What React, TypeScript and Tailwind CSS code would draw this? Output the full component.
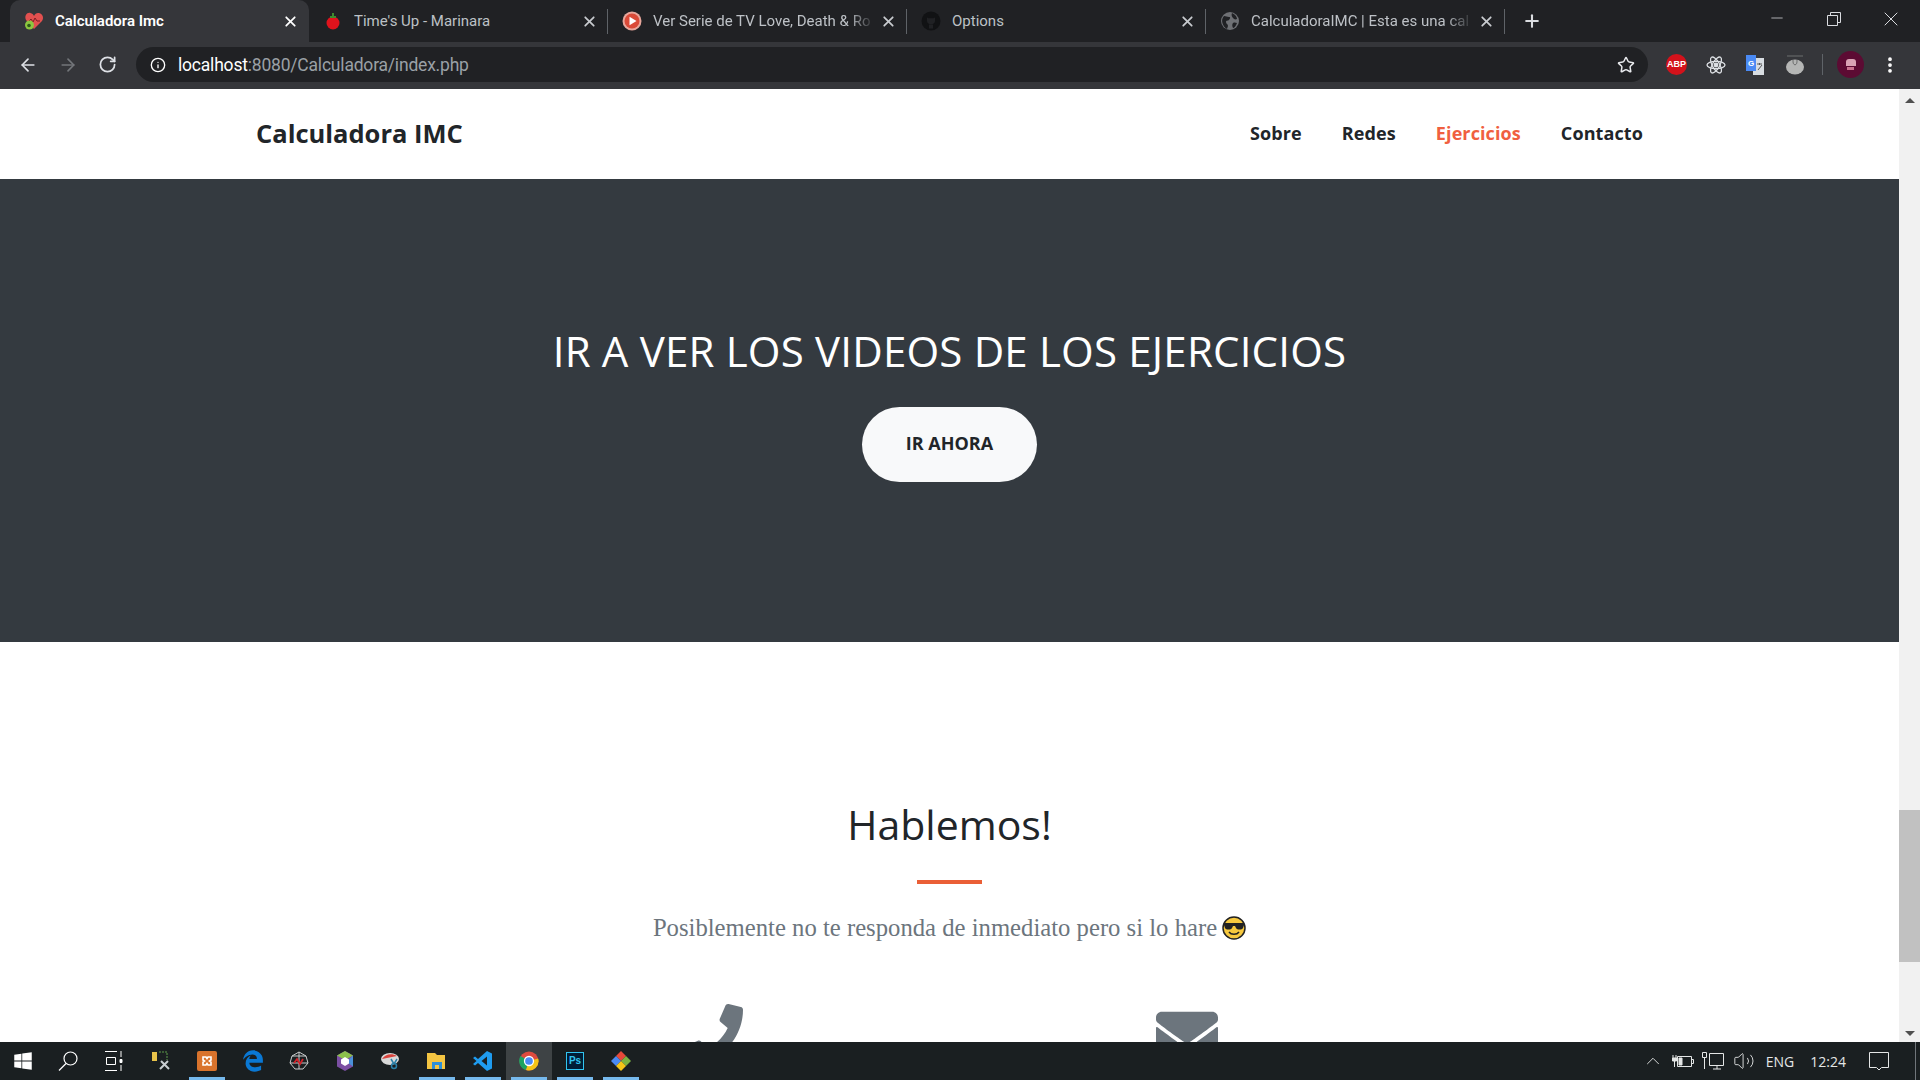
import type { ReactNode } from "react";
import { ArrowLeft, ArrowRight, RotateCw, Info, X, Plus, Minus, Star, EllipsisVertical, ChevronUp, Volume2 } from "lucide-react";
import { FaPhone, FaEnvelope, FaWindows, FaEdgeLegacy } from "react-icons/fa";

const Heart = () => (
  <svg viewBox="0 0 20 20" className="w-5 h-5">
    <path d="M10 18 L2 9 C0 5 3 1 6.500 2 C8 2.400 9.500 3.500 10 5 C11 2.500 13 1.500 15 2 C19 3 20 7 18 10z" fill="#e2504f" />
    <path d="M5 10l2-2 2 3 2-4 2 3h3" stroke="#7a1e22" strokeWidth="1" fill="none" />
    <circle cx="5.500" cy="14" r="4.500" fill="#8cc63f" />
    <circle cx="5" cy="14.500" r="1.800" fill="#2e5b18" />
  </svg>
);

const Tomato = () => (
  <svg viewBox="0 0 20 20" className="w-5 h-5">
    <circle cx="10" cy="12" r="6.500" fill="#e0131c" />
    <path d="M10 2v4M7 6h6" stroke="#3d8b2e" strokeWidth="2" />
  </svg>
);

const PlayIcon = () => (
  <svg viewBox="0 0 20 20" className="w-5 h-5">
    <circle cx="10" cy="10" r="9.500" fill="#e8a79c" />
    <circle cx="10" cy="10" r="7.500" fill="#da4a38" />
    <path d="M7.500 5.800v8.400l7-4.200z" fill="#fff" />
  </svg>
);

const GithubIcon = () => (
  <svg viewBox="0 0 20 20" className="w-5 h-5">
    <circle cx="10" cy="10" r="9.500" fill="#111214" />
    <path d="M6 6.500l1.500.8h5l1.500-.8v3.500c0 2-1.500 3.200-4 3.200s-4-1.200-4-3.200z" fill="#202124" />
    <path d="M8 13.500v4h4v-4z" fill="#202124" />
  </svg>
);

const GlobeIcon = () => (
  <svg viewBox="0 0 20 20" className="w-5 h-5">
    <circle cx="10" cy="10" r="9" fill="#6f7175" />
    <path d="M4 5c2 0 3 1 5 1s1 2 0 3-3 0-3 2 2 2 2 4l-1 3C3 16 0 9 4 5zM12 2c2 1 5 3 5 6-2 1-3 0-4-1s-2-3-1-5zM13 12c2-1 3 0 4 0-1 3-3 5-4 5-1-2-1-4 0-5z" fill="#202124" />
  </svg>
);

function Tab({ icon, title, active, fade }: { icon: ReactNode; title: string; active?: boolean; fade?: boolean }) {
  return (
    <div
      className={`relative w-[299px] h-[42px] flex items-center pl-[14px] pr-[10px] shrink-0 ${
        active ? "bg-[#35363a] rounded-t-[10px] text-white font-semibold" : "text-[#bdc1c6]"
      }`}
    >
      <span className="w-5 h-5 shrink-0">{icon}</span>
      <span
        className={`ml-[11px] w-[223px] text-[15px] leading-5 whitespace-nowrap overflow-hidden font-['Roboto',sans-serif] ${
          fade ? "[mask-image:linear-gradient(to_right,black_88%,transparent)]" : ""
        }`}
      >
        {title}
      </span>
      <X className={`ml-[5px] w-[17px] h-[17px] ${active ? "text-white" : "text-[#c8cbcf]"}`} strokeWidth={2.500} />
      {!active && <span className="absolute right-0 top-[9px] w-px h-[25px] bg-[#5f6368]" />}
    </div>
  );
}

function TabStrip() {
  return (
    <div className="h-[42px] bg-[#202124] flex pl-[10px] shrink-0">
      <Tab active icon={<Heart />} title="Calculadora Imc" />
      <Tab icon={<Tomato />} title="Time's Up - Marinara" />
      <Tab fade icon={<PlayIcon />} title="Ver Serie de TV Love, Death & Ro" />
      <Tab icon={<GithubIcon />} title="Options" />
      <Tab fade icon={<GlobeIcon />} title="CalculadoraIMC | Esta es una cal" />
      <Plus className="ml-[17px] mt-[11px] w-[20px] h-[20px] text-[#dadce0]" strokeWidth={2.500} />
      <div className="ml-auto flex items-start text-[#dadce0]">
        <Minus className="mt-[9px] mr-[41px] w-[18px] h-[18px]" strokeWidth={1} />
        <svg viewBox="0 0 14 14" className="mt-[12px] mr-[38px] w-[14px] h-[14px]" fill="none" stroke="currentColor">
          <path d="M3.500 3.500V.5h10v10h-3M.5 3.500h10v10H.5z" />
        </svg>
        <X className="mt-[7px] mr-[17px] w-[24px] h-[24px]" strokeWidth={1} />
      </div>
    </div>
  );
}

function Toolbar() {
  return (
    <div className="h-[47px] bg-[#35363a] flex items-start pt-[5px] shrink-0">
      <div className="w-[136px] h-[35px] flex items-center pl-[18px] gap-[20px]">
        <ArrowLeft className="w-[20px] h-[20px] text-[#dee1e6]" strokeWidth={2} />
        <ArrowRight className="w-[20px] h-[20px] text-[#73767a]" strokeWidth={2} />
        <RotateCw className="w-[19px] h-[19px] text-[#dee1e6]" strokeWidth={2.200} />
      </div>
      <div className="w-[1512px] h-[35px] bg-[#202124] rounded-full flex items-center pl-[14px] pr-[13px] shrink-0">
        <Info className="w-[16px] h-[16px] text-white" strokeWidth={2} />
        <span className="ml-[12px] text-[17.500px] leading-6 tracking-[-0.2px] text-[#9aa0a6] font-['Roboto',sans-serif]">
          <span className="text-white">localhost</span>:8080/Calculadora/index.php
        </span>
        <Star className="ml-auto w-[18px] h-[18px] text-[#e8eaed]" strokeWidth={2} />
      </div>
      <div className="flex items-center h-[35px] flex-1">
        <span className="ml-[18px] w-[21px] h-[21px] bg-[#d3121b] rounded-full text-white text-[9px] font-bold flex items-center justify-center font-['Liberation_Sans',sans-serif]">
          ABP
        </span>
        <svg viewBox="0 0 20 20" className="ml-[19px] w-[20px] h-[20px]" fill="none" stroke="#dde0e4" strokeWidth="1.300">
          <ellipse cx="10" cy="10" rx="9" ry="3.600" />
          <ellipse cx="10" cy="10" rx="9" ry="3.600" transform="rotate(60 10 10)" />
          <ellipse cx="10" cy="10" rx="9" ry="3.600" transform="rotate(120 10 10)" />
          <circle cx="10" cy="10" r="1.800" fill="#dde0e4" />
        </svg>
        <svg viewBox="0 0 20 20" className="ml-[19px] w-5 h-5">
          <path d="M8 3h11v17H8z" fill="#d8dde2" />
          <path d="M12 9h5M14.500 8v2M13 15l4-5" stroke="#555" strokeWidth="1" />
          <path d="M1 0h10v16H1z" fill="#4a8af4" />
          <text x="3" y="11" fontSize="8" fontWeight="700" fill="#fff" fontFamily="Liberation Sans, sans-serif">G</text>
        </svg>
        <svg viewBox="0 0 20 20" className="ml-[20px] w-5 h-5">
          <ellipse cx="10" cy="12" rx="9" ry="7.500" fill="#b5b6b5" />
          <path d="M8 5c0 3 0 4 2 5 2-1 2-2 2-5M2 1h16" stroke="#6d6e6e" strokeWidth="1" fill="none" />
        </svg>
        <span className="ml-[17px] w-px h-[21px] bg-[#5f6368]" />
        <span className="ml-[14px] w-[27px] h-[27px] rounded-full bg-[#5c0b33] flex flex-col items-center justify-center gap-px">
          <span className="w-[10px] h-[7px] bg-[#d9a3b5] rounded-t-[3px]" />
          <span className="w-[7px] h-[3px] bg-[#c8728f]" />
        </span>
        <EllipsisVertical className="ml-[16px] w-[20px] h-[20px] text-white" strokeWidth={2.500} />
      </div>
    </div>
  );
}

function Scrollbar() {
  return (
    <div className="w-[21px] bg-[#f1f1f1] flex flex-col items-center shrink-0 relative">
      <span className="mt-[9px] w-0 h-0 border-x-[5px] border-x-transparent border-b-[5px] border-b-[#505050]" />
      <span className="absolute left-0 top-[721px] w-[21px] h-[152px] bg-[#c1c1c1]" />
      <span className="mt-auto mb-[6px] w-0 h-0 border-x-[5px] border-x-transparent border-t-[5px] border-t-[#505050]" />
    </div>
  );
}

function CoolEmoji() {
  return (
    <svg viewBox="0 0 24 24" className="inline-block w-[24px] h-[24px] ml-[5px] align-[-4px]">
      <circle cx="12" cy="12" r="11" fill="#f7c93e" stroke="#222" strokeWidth="1.500" />
      <path d="M2 7h20v2l-1 3c-1 2-6 2-7 0l-1-2h-2l-1 2c-1 2-6 2-7 0L2 9z" fill="#222" />
      <path d="M7 16c2 3 8 3 10 0" stroke="#222" strokeWidth="1.500" fill="none" />
    </svg>
  );
}

function Page() {
  return (
    <div className="flex-1 min-w-0 overflow-hidden">
      <nav className="h-[90px] bg-white flex items-center justify-between pl-[256px] pr-[256px] pb-[2px]">
        <span className="text-[25.500px] font-bold text-[#212529] font-['Open_Sans',sans-serif]">Calculadora IMC</span>
        <div className="flex gap-[40px] text-[18px] tracking-[0.1px] font-bold text-[#212529] font-['Open_Sans',sans-serif]">
          <span>Sobre</span>
          <span>Redes</span>
          <span className="text-[#f05f40]">Ejercicios</span>
          <span>Contacto</span>
        </div>
      </nav>
      <section className="h-[463px] bg-[#343a40] flex flex-col items-center pt-[142px]">
        <h2 className="text-[42px] leading-[60px] tracking-[0.2px] text-white font-['Open_Sans',sans-serif] font-normal">IR A VER LOS VIDEOS DE LOS EJERCICIOS</h2>
        <button className="mt-[26px] w-[175px] h-[75px] pb-[2px] rounded-[40px] bg-[#f8f9fa] text-[#212529] text-[18px] font-bold font-['Open_Sans',sans-serif]">
          IR AHORA
        </button>
      </section>
      <section className="bg-white flex flex-col items-center pt-[149px]">
        <h2 className="text-[41px] leading-[66px] text-[#212529] font-['Open_Sans',sans-serif]">Hablemos!</h2>
        <div className="mt-[23px] w-[65px] h-1 bg-[#ea5f36]" />
        <p className="mt-[26px] text-[24.700px] leading-[36px] text-[#6c757d] font-['Liberation_Serif',serif]">
          Posiblemente no te responda de inmediato pero si lo hare
          <CoolEmoji />
        </p>
        <div className="mt-[58px] w-[954px] grid grid-cols-2 text-[#6c757d]">
          <div className="flex justify-center pl-[4px]">
            <FaPhone className="w-[60px] h-[60px]" />
          </div>
          <div className="flex justify-center pr-[2px]">
            <FaEnvelope className="w-[62px] h-[62px]" />
          </div>
        </div>
      </section>
    </div>
  );
}

function TaskCell({ children, open, active }: { children: ReactNode; open?: boolean; active?: boolean }) {
  return (
    <div className={`relative w-[46px] h-full flex items-center justify-center shrink-0 ${active ? "bg-[#3e4345]" : ""}`}>
      {children}
      {open && <span className="absolute bottom-0 left-[5px] right-[5px] h-[3px] bg-[#76b9ed]" />}
    </div>
  );
}

function Taskbar() {
  return (
    <div className="h-[38px] bg-[#1a1f21] flex items-center shrink-0 text-white">
      <TaskCell><FaWindows className="w-5 h-5" /></TaskCell>
      <TaskCell>
        <svg viewBox="0 0 20 20" className="w-5 h-5 mr-[3px]" fill="none" stroke="currentColor" strokeWidth="1.200">
          <circle cx="12.500" cy="7.500" r="6.500" />
          <path d="M8 12.500L1 19.500" />
        </svg>
      </TaskCell>
      <TaskCell>
        <svg viewBox="0 0 20 20" className="w-5 h-5 mr-[3px]" fill="none" stroke="currentColor">
          <path d="M1 .5h12M1 19.500h12M2.500 6.500h9v7h-9zM17 0v6M17 14v6" />
          <path d="M16 8.500h2v3h-2z" fill="currentColor" />
        </svg>
      </TaskCell>
      <TaskCell>
        <svg viewBox="0 0 20 20" className="w-5 h-5">
          <rect x="1" y="1" width="5" height="9" fill="#e8c34a" />
          <path d="M8 1h8v8" stroke="#5d9c4a" strokeDasharray="2 1" fill="none" />
          <path d="M9 18l8-8M10 10l8 8" stroke="#c9ced2" strokeWidth="2" />
        </svg>
      </TaskCell>
      <TaskCell open>
        <svg viewBox="0 0 20 20" className="w-5 h-5">
          <rect width="20" height="20" rx="2" fill="#d9732c" />
          <path d="M6 6h3l1 1.500L11 6h3v3l-1.500 1L14 11v3h-3l-1-1.500L9 14H6v-3l1.500-1L6 9z" fill="none" stroke="#fff" strokeWidth="1.600" />
        </svg>
      </TaskCell>
      <TaskCell><FaEdgeLegacy className="w-[22px] h-[22px] text-[#0a78d4]" /></TaskCell>
      <TaskCell>
        <svg viewBox="0 0 20 20" className="w-5 h-5" fill="none" stroke="#c9cccd">
          <path d="M10 1l7 4 2 7-5 6H6l-5-6 2-7zM10 1v17M1 12h18M3 5l14 0" />
          <path d="M5 12l3-4 3 5 3-5" stroke="#d2232a" strokeWidth="1.800" />
        </svg>
      </TaskCell>
      <TaskCell>
        <svg viewBox="0 0 20 20" className="w-5 h-5">
          <path d="M10 0l8 4.500v11L10 20l-8-4.500v-11z" fill="#7b4fa3" />
          <path d="M10 0l8 4.500-8 4.500-8-4.500z" fill="#8cc04b" />
          <path d="M10 6l4 2.500v4L10 15l-4-2.500v-4z" fill="#fff" />
          <path d="M18 4.500v11L14 12.500v-4z" fill="#4a90d9" />
        </svg>
      </TaskCell>
      <TaskCell>
        <svg viewBox="0 0 20 20" className="w-5 h-5">
          <ellipse cx="9" cy="8" rx="9" ry="6" fill="#d9d9d9" />
          <path d="M1 8c3-5 10-6 15-3z" fill="#d8433c" />
          <circle cx="13" cy="15" r="2.500" fill="none" stroke="#2a7fa8" strokeWidth="1.500" />
          <path d="M10 8l3 5M16 8l-3 5" stroke="#2a7fa8" strokeWidth="1.500" />
        </svg>
      </TaskCell>
      <TaskCell open>
        <svg viewBox="0 0 20 20" className="w-5 h-5">
          <path d="M0 2h8l2 2h8v14H0z" fill="#f4c542" />
          <path d="M5 11h10v7H5z" fill="#2c8fd9" />
          <path d="M8 14h4v4H8z" fill="#f4c542" />
        </svg>
      </TaskCell>
      <TaskCell open>
        <svg viewBox="0 0 20 20" className="w-5 h-5">
          <path d="M14 0l5 2.500v15L14 20 5 12l-3 2.500L0 13l3.500-3L0 7l2-1.500L5 8z" fill="#1f9cf0" />
          <path d="M14 5.500v9L8.500 10z" fill="#1a1f21" />
        </svg>
      </TaskCell>
      <TaskCell open active>
        <svg viewBox="0 0 20 20" className="w-5 h-5">
          <circle cx="10" cy="10" r="9.500" fill="#dd4b3e" />
          <path d="M10 10L1.500 5A9.500 9.500 0 0 0 7 19z" fill="#1ea362" />
          <path d="M10 10l9.200-2.500A9.500 9.500 0 0 1 7 19z" fill="#f5c518" />
          <circle cx="10" cy="10" r="4.500" fill="#4a8af4" stroke="#fff" strokeWidth="1.300" />
        </svg>
      </TaskCell>
      <TaskCell open>
        <span className="w-[18px] h-[18px] border border-[#31c5f0] bg-[#001e36] text-[#31c5f0] text-[10px] leading-none font-bold flex items-center justify-center font-['Liberation_Sans',sans-serif]">Ps</span>
      </TaskCell>
      <TaskCell open>
        <svg viewBox="0 0 20 20" className="w-5 h-5">
          <path d="M10 0l5 5-5 5-5-5z" fill="#e5493a" />
          <path d="M5 5l5 5-5 5-5-5z" fill="#4a8af4" />
          <path d="M15 5l5 5-5 5-5-5z" fill="#7cb342" />
          <path d="M10 10l5 5-5 5-5-5z" fill="#f5c518" />
        </svg>
      </TaskCell>
      <div className="ml-auto flex items-center h-full text-[#e4e6e6] font-['Open_Sans',sans-serif] text-[14px]">
        <ChevronUp className="w-[22px] h-[22px]" strokeWidth={1} />
        <svg viewBox="0 0 22 14" className="ml-[8px] w-[22px] h-[14px]" fill="none" stroke="currentColor">
          <path d="M5.500 2.500h14v10h-14zM19.500 5.500h2v4h-2z" />
          <path d="M7 4h3v7H7zM1 1v3M4 1v3M.5 4h4v3h-4zM2.500 7v6" fill="currentColor" />
        </svg>
        <svg viewBox="0 0 22 18" className="ml-[8px] w-[22px] h-[18px]" fill="none" stroke="currentColor">
          <path d="M7.500 1.500h14v12h-14zM.5.500h4v5h-4zM2.500 5.500V17M11 17h8M15 13.500V17" />
        </svg>
        <Volume2 className="ml-[9px] w-[22px] h-[22px]" strokeWidth={1} />
        <span className="ml-[11px]">ENG</span>
        <span className="ml-[16px]">12:24</span>
        <svg viewBox="0 0 20 20" className="ml-[23px] w-5 h-5" fill="none" stroke="currentColor">
          <path d="M.5 1.500h19v15h-7l-2.500 2.500-2.500-2.500h-7z" />
        </svg>
        <span className="ml-[26px] w-px h-full bg-[#70757a] mr-[4px]" />
      </div>
    </div>
  );
}

export default function App() {
  return (
    <div className="w-[1920px] h-[1080px] flex flex-col overflow-hidden font-['Open_Sans',sans-serif] bg-white">
      <TabStrip />
      <Toolbar />
      <div className="flex flex-1 min-h-0">
        <Page />
        <Scrollbar />
      </div>
      <Taskbar />
    </div>
  );
}
